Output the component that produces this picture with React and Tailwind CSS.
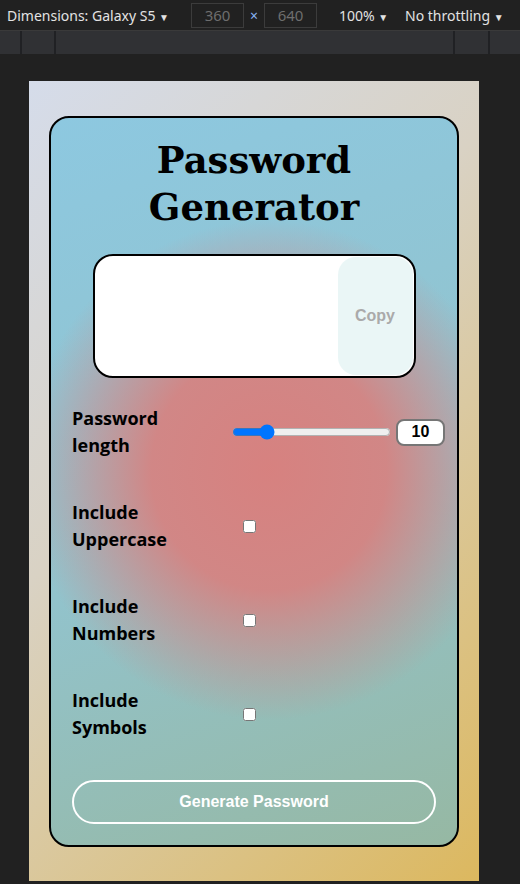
import React, { useState } from 'react';

const Toggle = ({ label, checked, onChange }) => (
  <div className="flex items-center">
    <div className="w-[160px] shrink-0 font-['Open_Sans',sans-serif] text-[18px] font-bold leading-[27px] text-black">
      {label[0]}
      <br />
      {label[1]}
    </div>
    <div className="pl-[11px] flex items-center">
      <input type="checkbox" checked={checked} onChange={onChange} className="w-[13px] h-[13px]" />
    </div>
  </div>
);

const App = () => {
  const [length, setLength] = useState(10);
  const [upper, setUpper] = useState(false);
  const [numbers, setNumbers] = useState(false);
  const [symbols, setSymbols] = useState(false);

  return (
    <div className="w-[520px] h-[884px] bg-[#212121] overflow-hidden">
      {/* devtools device bar */}
      <div className="h-[31px] flex items-center whitespace-nowrap text-[14px] text-[#e3e3e3] font-['Noto_Sans',sans-serif] border-b border-[#3a3a3a]">
        <span className="ml-[7px] w-[184px] shrink-0">Dimensions: Galaxy S5 <span className="text-[10px]">▼</span></span>
        <div className="w-[53px] h-[25px] shrink-0 border border-[#3c3c3c] text-[#6e6e6e] text-[15px] flex items-center justify-center">360</div>
        <span className="w-[20px] shrink-0 text-center text-[#8ab4f8] text-[14px]">×</span>
        <div className="w-[53px] h-[25px] shrink-0 border border-[#3c3c3c] text-[#6e6e6e] text-[15px] flex items-center justify-center">640</div>
        <span className="ml-[22px] w-[66px] shrink-0">100% <span className="text-[10px]">▼</span></span>
        <span className="shrink-0">No throttling <span className="text-[10px]">▼</span></span>
      </div>
      <div className="h-[23px] bg-[#303134] flex">
        <div className="w-[20px]" />
        <div className="w-[2px] bg-[#202124]" />
        <div className="w-[32px]" />
        <div className="w-[2px] bg-[#202124]" />
        <div className="flex-1" />
        <div className="w-[2px] bg-[#202124]" />
        <div className="w-[33px]" />
        <div className="w-[2px] bg-[#202124]" />
        <div className="w-[30px]" />
      </div>

      {/* emulated viewport */}
      <div className="pl-[29px] pt-[27px]">
        <div className="w-[450px] h-[800px] pt-[35px] pl-[20px] bg-[linear-gradient(135deg,#d5dcea_0%,#d9d2c4_40%,#dcb85f_100%)]">
          <div className="w-[410px] h-[731px] border-2 border-black rounded-[20px] px-[21px] pt-[19px] pb-[21px] flex flex-col bg-[radial-gradient(ellipse_245px_250px_at_218px_352px,rgba(216,128,126,0.98)_0%,rgba(216,128,126,0.9)_48%,rgba(216,128,126,0)_100%),linear-gradient(160deg,#8dc8e0_0%,#92c3cc_55%,#96b8a3_100%)]">
            <h1 className="text-center font-['DejaVu_Serif',serif] font-bold text-[37px] leading-[47px] text-black">
              Password
              <br />
              Generator
            </h1>

            <div className="mt-[23px] mx-auto w-[323px] h-[124px] border-2 border-black rounded-[20px] bg-white flex p-[1px]">
              <input readOnly value="" className="flex-1 min-w-0 bg-transparent outline-none px-3" />
              <button className="w-[75px] h-full bg-[#eaf6f6] rounded-[18px] font-['Liberation_Sans',sans-serif] font-bold text-[16px] text-[#aaaaaa]">
                Copy
              </button>
            </div>

            <div className="mt-[27px] flex flex-col gap-[40px]">
              <div className="flex items-center">
                <div className="w-[160px] shrink-0 font-['Open_Sans',sans-serif] text-[18px] font-bold leading-[27px] text-black">
                  Password
                  <br />
                  length
                </div>
                <input
                  type="range"
                  min="4"
                  max="36"
                  value={length}
                  onChange={(e) => setLength(Number(e.target.value))}
                  className="w-[159px] m-0 shrink-0"
                />
                <input
                  type="number"
                  value={length}
                  onChange={(e) => setLength(Number(e.target.value))}
                  className="ml-[5px] w-[49px] h-[27px] shrink-0 border-2 border-[#767676] rounded-[8px] bg-white text-center font-['Liberation_Sans',sans-serif] font-bold text-[16px] text-black [appearance:textfield] [&::-webkit-inner-spin-button]:appearance-none"
                />
              </div>
              <Toggle label={['Include', 'Uppercase']} checked={upper} onChange={() => setUpper(!upper)} />
              <Toggle label={['Include', 'Numbers']} checked={numbers} onChange={() => setNumbers(!numbers)} />
              <Toggle label={['Include', 'Symbols']} checked={symbols} onChange={() => setSymbols(!symbols)} />
            </div>

            <button className="mt-[39px] h-[44px] w-full border-2 border-white rounded-full font-['Liberation_Sans',sans-serif] font-bold text-[16px] text-white">
              Generate Password
            </button>
          </div>
        </div>
      </div>
    </div>
  );
};

export default App;
